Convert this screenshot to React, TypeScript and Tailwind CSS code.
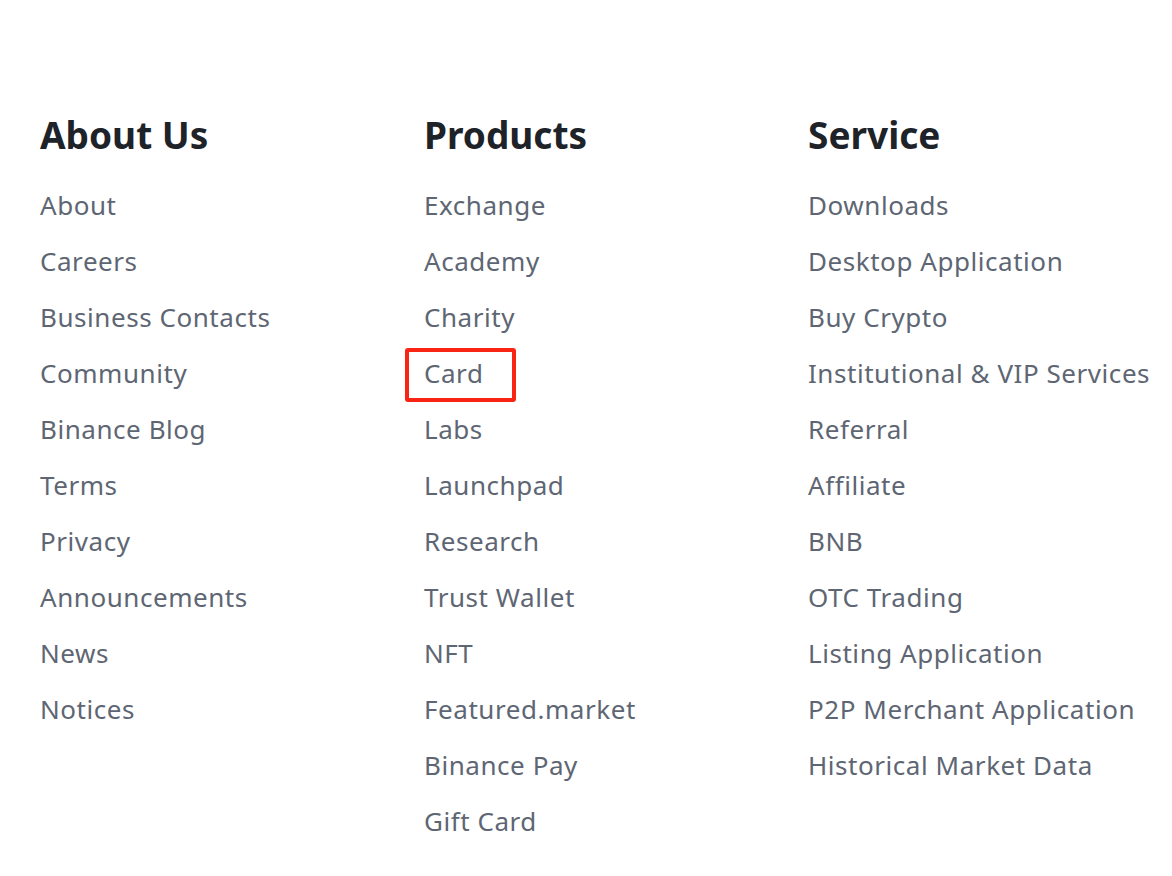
const columns = [
  {
    title: 'About Us',
    links: ['About', 'Careers', 'Business Contacts', 'Community', 'Binance Blog', 'Terms', 'Privacy', 'Announcements', 'News', 'Notices'],
  },
  {
    title: 'Products',
    links: ['Exchange', 'Academy', 'Charity', 'Card', 'Labs', 'Launchpad', 'Research', 'Trust Wallet', 'NFT', 'Featured.market', 'Binance Pay', 'Gift Card'],
  },
  {
    title: 'Service',
    links: ['Downloads', 'Desktop Application', 'Buy Crypto', 'Institutional & VIP Services', 'Referral', 'Affiliate', 'BNB', 'OTC Trading', 'Listing Application', 'P2P Merchant Application', 'Historical Market Data'],
  },
];

export default function App() {
  return (
    <div className="min-h-screen w-[1172px] bg-white pl-10 pt-[111px] font-['Noto_Sans',sans-serif]">
      <div className="grid grid-cols-[384px_384px_1fr]">
        {columns.map((col) => (
          <div key={col.title}>
            <h2 className="text-[37px] font-bold leading-[48px] text-[#1e2329]">{col.title}</h2>
            <ul className="mt-[18px]">
              {col.links.map((link) => (
                <li key={link} className="h-14 text-[26px] leading-[56px] tracking-[0.55px] text-[#5e6673]">
                  <span className="relative inline-block h-14 align-top">
                    {link}
                    {link === 'Card' && col.title === 'Products' && (
                      <span className="absolute -left-[19px] -right-[33px] top-[3px] -bottom-[1px] rounded-[3px] border-4 border-[#fa2414]" />
                    )}
                  </span>
                </li>
              ))}
            </ul>
          </div>
        ))}
      </div>
    </div>
  );
}
